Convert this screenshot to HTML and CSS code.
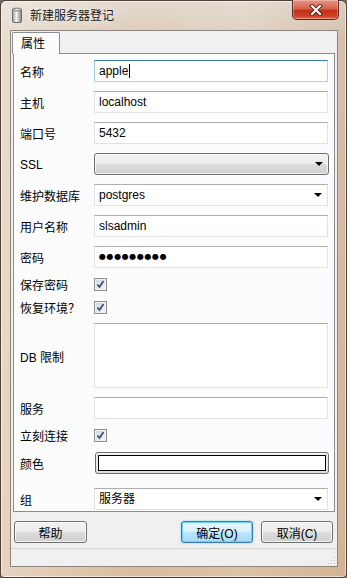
FILE: index.html
```html
<!DOCTYPE html>
<html lang="zh">
<head>
<meta charset="utf-8">
<title>新建服务器登记</title>
<link rel="stylesheet" href="styles.css">
</head>
<body>
<div class="window">
  <div class="titlebar">
    <svg class="app-icon" width="10" height="16" viewBox="0 0 10 16">
      <defs>
        <linearGradient id="cyl" x1="0" x2="1" y1="0" y2="0">
          <stop offset="0" stop-color="#9a9a9a"/>
          <stop offset="0.45" stop-color="#f4f4f4"/>
          <stop offset="1" stop-color="#7c7c7c"/>
        </linearGradient>
      </defs>
      <rect x="0.5" y="1.5" width="9" height="14" rx="1.5" fill="url(#cyl)" stroke="#6b6b6b"/>
      <ellipse cx="5" cy="2.5" rx="4" ry="1.5" fill="#d8d8d8" stroke="#6b6b6b" stroke-width="0.8"/>
    </svg>
    <span class="title">新建服务器登记</span>
    <div class="close-btn">
      <svg width="14" height="12" viewBox="0 0 14 12">
        <path d="M3 2 L11 10 M11 2 L3 10" stroke="#5a2a20" stroke-width="4" stroke-linecap="square"/>
        <path d="M3 2 L11 10 M11 2 L3 10" stroke="#ffffff" stroke-width="2" stroke-linecap="square"/>
      </svg>
    </div>
  </div>

  <div class="client">
    <div class="tabs">
      <div class="tab">属性</div>
    </div>
    <div class="panel">
      <div class="row">
        <span class="label">名称</span>
        <div class="field focus">apple<span class="caret"></span></div>
      </div>
      <div class="row">
        <span class="label">主机</span>
        <div class="field">localhost</div>
      </div>
      <div class="row">
        <span class="label">端口号</span>
        <div class="field">5432</div>
      </div>
      <div class="row">
        <span class="label">SSL</span>
        <div class="combo-btn"><span class="arrow"></span></div>
      </div>
      <div class="row">
        <span class="label">维护数据库</span>
        <div class="field combo">postgres<span class="arrow"></span></div>
      </div>
      <div class="row">
        <span class="label">用户名称</span>
        <div class="field">slsadmin</div>
      </div>
      <div class="row">
        <span class="label">密码</span>
        <div class="field pw">●●●●●●●●●</div>
      </div>
      <div class="row chk-row">
        <span class="label">保存密码</span>
        <span class="checkbox"><svg width="9" height="9" viewBox="0 0 9 9"><path d="M1.5 4.5 L3.5 7 L7.5 1" fill="none" stroke="#3c4f8a" stroke-width="1.8"/></svg></span>
      </div>
      <div class="row chk-row">
        <span class="label">恢复环境？</span>
        <span class="checkbox"><svg width="9" height="9" viewBox="0 0 9 9"><path d="M1.5 4.5 L3.5 7 L7.5 1" fill="none" stroke="#3c4f8a" stroke-width="1.8"/></svg></span>
      </div>
      <div class="row area-row">
        <span class="label">DB 限制</span>
        <div class="field area"></div>
      </div>
      <div class="row">
        <span class="label">服务</span>
        <div class="field"></div>
      </div>
      <div class="row chk-row">
        <span class="label">立刻连接</span>
        <span class="checkbox"><svg width="9" height="9" viewBox="0 0 9 9"><path d="M1.5 4.5 L3.5 7 L7.5 1" fill="none" stroke="#3c4f8a" stroke-width="1.8"/></svg></span>
      </div>
      <div class="row color-row">
        <span class="label">颜色</span>
        <div class="color-btn"><span class="swatch"></span></div>
      </div>
      <div class="row group-row">
        <span class="label">组</span>
        <div class="field combo">服务器<span class="arrow"></span></div>
      </div>
    </div>

    <div class="buttons">
      <button class="btn">帮助</button>
      <span class="spacer"></span>
      <button class="btn default">确定(O)</button>
      <button class="btn">取消(C)</button>
    </div>

    <div class="statusbar">
      <svg class="grip" width="9" height="9" viewBox="0 0 9 9">
        <g fill="#b8b8b8">
          <rect x="7" y="1" width="1" height="1"/>
          <rect x="4" y="4" width="1" height="1"/><rect x="7" y="4" width="1" height="1"/>
          <rect x="1" y="7" width="1" height="1"/><rect x="4" y="7" width="1" height="1"/><rect x="7" y="7" width="1" height="1"/>
        </g>
      </svg>
    </div>
  </div>
</div>
</body>
</html>
```

FILE: styles.css
```css
* { box-sizing: border-box; }

html, body {
  margin: 0;
  padding: 0;
  width: 347px;
  height: 578px;
  overflow: hidden;
  background: #6d6a66;
}

body {
  font-family: "Liberation Sans", "Noto Sans CJK SC", sans-serif;
  font-size: 12px;
  color: #000;
}

.window {
  width: 347px;
  height: 578px;
  display: flex;
  flex-direction: column;
  padding: 0 8px 10px 9px;
  border: 1px solid #4e4238;
  border-radius: 6px 6px 4px 4px;
  background:
    linear-gradient(90deg, rgba(255,255,255,0.35), rgba(255,255,255,0) 40%, rgba(255,255,255,0.1) 70%, rgba(120,70,30,0.08)),
    linear-gradient(180deg, #e2d9ce 0, #dccab6 40px, #d9bc9d 100%);
  box-shadow: inset 0 0 0 1px rgba(255,255,255,0.55);
}

.titlebar {
  height: 29px;
  display: flex;
  align-items: flex-start;
  flex-shrink: 0;
}

.app-icon {
  margin: 6px 0 0 2px;
}

.title {
  margin: 5px 0 0 8px;
  font-family: "Noto Sans CJK SC", sans-serif;
  font-size: 12px;
  line-height: 17px;
  color: #1a1a1a;
  text-shadow: 0 0 6px rgba(255,255,255,0.9);
}

.close-btn {
  margin-left: auto;
  margin-right: -1px;
  margin-top: -1px;
  width: 47px;
  height: 20px;
  border: 1px solid #5a2a22;
  border-top: none;
  border-radius: 0 0 5px 5px;
  background: linear-gradient(180deg, #e79282 0, #d8634c 45%, #c2311a 55%, #cf4022 85%, #e0704e 100%);
  box-shadow: inset 0 0 0 1px rgba(255,255,255,0.3);
  display: flex;
  align-items: center;
  justify-content: center;
}

.client {
  flex: 1;
  display: flex;
  flex-direction: column;
  background: #f0f0f0;
  border: 1px solid #8d8680;
}

.tabs {
  display: flex;
  height: 21px;
  margin-top: 1px;
  padding-left: 1px;
  position: relative;
  z-index: 1;
}

.tab {
  width: 48px;
  height: 22px;
  border: 1px solid #898c95;
  border-bottom: none;
  border-radius: 2px 2px 0 0;
  background: #fcfcfc;
  font-family: "Noto Sans CJK SC", sans-serif;
  line-height: 19px;
  padding-left: 8px;
}

.panel {
  margin-left: 2px;
  width: 322px;
  border: 1px solid #898c95;
  background: #fcfcfc;
  padding: 6px 5px 1px 6px;
  display: flex;
  flex-direction: column;
  gap: 9px;
}

.row {
  display: flex;
  align-items: center;
  height: 22px;
}

.chk-row { height: 14px; }
.area-row { height: 65px; }
.color-row { height: 24px; }
.group-row { margin-top: 4px; }

.label {
  width: 74px;
  flex-shrink: 0;
  font-family: "Liberation Sans", "Noto Sans CJK SC", sans-serif;
  font-size: 12px;
  color: #000;
  padding-top: 1px;
}

.field {
  width: 234px;
  height: 22px;
  border: 1px solid #dde2e8;
  border-top-color: #abadb3;
  border-left-color: #e2e3ea;
  background: #fff;
  padding: 0 4px;
  line-height: 20px;
  display: flex;
  align-items: center;
  position: relative;
  white-space: nowrap;
}

.field.focus {
  border-color: #b5cfe7;
  border-top-color: #3d7bad;
  border-left-color: #a4c9e3;
}

.caret {
  display: inline-block;
  width: 1px;
  height: 14px;
  background: #000;
  margin-left: 1px;
}

.field.pw {
  font-size: 8px;
  letter-spacing: 0.6px;
  font-family: "DejaVu Sans", sans-serif;
}

.field.area {
  height: 65px;
}

.arrow {
  position: absolute;
  right: 5px;
  top: 8px;
  width: 0;
  height: 0;
  border-left: 4px solid transparent;
  border-right: 4px solid transparent;
  border-top: 4px solid #000;
}

.combo-btn {
  width: 235px;
  height: 22px;
  border: 1px solid #707070;
  border-radius: 3px;
  background: linear-gradient(180deg, #f2f2f2 0, #ebebeb 50%, #dddddd 51%, #cfcfcf 100%);
  box-shadow: inset 0 0 0 1px rgba(255,255,255,0.7);
  position: relative;
}

.combo-btn .arrow { right: 5px; top: 8px; }

.checkbox {
  width: 13px;
  height: 13px;
  border: 1px solid #8e8f8f;
  background: linear-gradient(135deg, #d2d4d8, #fafafa);
  box-shadow: inset 0 0 0 1px #f0f0f0;
  display: flex;
  align-items: center;
  justify-content: center;
}

.color-btn {
  width: 234px;
  height: 22px;
  margin-left: 1px;
  border: 1px solid #707070;
  border-radius: 3px;
  background: linear-gradient(180deg, #f2f2f2, #dedede);
  padding: 2px;
  display: flex;
}

.swatch {
  flex: 1;
  background: #fff;
  border: 1px solid #000;
}

.buttons {
  display: flex;
  margin: 9px 4px 0 3px;
  gap: 8px;
  height: 22px;
}

.spacer { flex: 1; }

.btn {
  width: 73px;
  height: 22px;
  margin: 0;
  padding: 0;
  border: 1px solid #707070;
  border-radius: 3px;
  background: linear-gradient(180deg, #f2f2f2 0, #ebebeb 50%, #dddddd 51%, #cfcfcf 100%);
  box-shadow: inset 0 0 0 1px rgba(255,255,255,0.75);
  font-family: "Liberation Sans", "Noto Sans CJK SC", sans-serif;
  font-size: 12px;
  color: #000;
}

.btn.default {
  width: 72px;
  border-color: #3c7fb1;
  background: linear-gradient(180deg, #eaf6fd 0, #d9f0fc 50%, #bee6fd 51%, #a7d9f5 100%);
  box-shadow: inset 0 0 0 1px #6ad1f5, 0 0 2px #6cc3ef;
}

.buttons .btn:last-child { width: 72px; }

.statusbar {
  flex: 1;
  margin-top: 5px;
  border-top: 1px solid #d5d5d5;
  background: #f0f0f0;
  display: flex;
  align-items: flex-end;
  justify-content: flex-end;
  padding: 0 1px 1px 0;
}
```
